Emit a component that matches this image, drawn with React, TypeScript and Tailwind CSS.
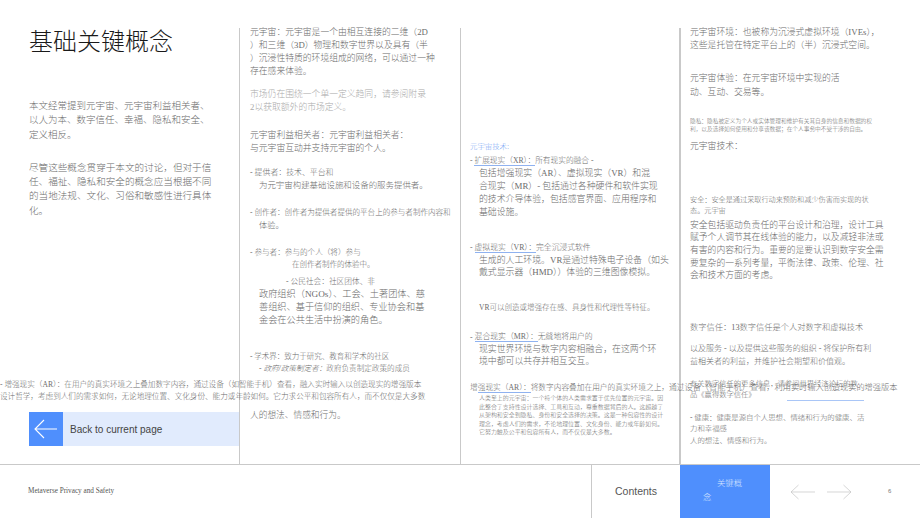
function Arrow({ dir, className }: { dir: "left" | "right"; className: string }) {
  return (
    <svg viewBox="0 0 26 16" fill="none" stroke="currentColor" strokeWidth="0.7" className={className}>
      {dir === "left" ? <path d="M25 8H1M8.5 1L1 8l7.5 7" /> : <path d="M1 8h24M17.5 1L25 8l-7.5 7" />}
    </svg>
  );
}

const L = "block whitespace-nowrap";
const U = "border-b border-[#8fb2f0]";

export default function App() {
  return (
    <div className="relative flex h-[518px] w-[920px] flex-col overflow-hidden bg-white font-['Liberation_Serif','Noto_Sans_CJK_SC',serif] font-light text-[#6b6b6b]">
      <main className="flex h-[465px] border-b border-[#c9c9c9] pt-[28px]">
        <section className="flex w-[240px] flex-col border-r border-[#c9c9c9] pl-[29px]">
          <h1 className="-mt-[2px] whitespace-nowrap text-[24px] leading-[32px] font-light text-[#1a1a1a]">基础关键概念</h1>
          <p className="mt-[41px] text-[9.5px] leading-[14.3px]">
            <span className={L}>本文经常提到元宇宙、元宇宙利益相关者、</span>
            <span className={L}>以人为本、数字信任、幸福、隐私和安全、</span>
            <span className={L}>定义相反。</span>
          </p>
          <p className="mt-[19px] text-[9.6px] leading-[14.3px]">
            <span className={L}>尽管这些概念贯穿于本文的讨论，但对于信</span>
            <span className={L}>任、福祉、隐私和安全的概念应当根据不同</span>
            <span className={L}>的当地法规、文化、习俗和敏感性进行具体</span>
            <span className={L}>化。</span>
          </p>
          <a className="mt-[194px] flex h-[34px] items-center bg-[#e1ebfd] font-['Liberation_Sans',sans-serif] text-[10px] font-normal text-[#444]">
            <span className="flex h-[34px] w-[34px] items-center justify-center bg-[#4f8ffd] text-white">
              <svg viewBox="0 0 24 20" fill="none" stroke="currentColor" strokeWidth="1.1" className="h-[20px] w-[24px]">
                <path d="M23 10H1M10 1l-9 9 9 9" />
              </svg>
            </span>
            <span className="ml-[7px]">Back to current page</span>
          </a>
        </section>

        <section className="flex w-[221px] flex-col border-r border-[#c9c9c9] pl-[10px] text-[8.8px]">
          <p className="-mt-[2px] leading-[13px]">
            <span className={L}>元宇宙：元宇宙是一个由相互连接的二维（2D</span>
            <span className={L}>）和三维（3D）物理和数字世界以及具有（半</span>
            <span className={L}>）沉浸性特质的环境组成的网络，可以通过一种</span>
            <span className={L}>存在感来体验。</span>
          </p>
          <p className="mt-[10px] leading-[13px] text-[#aaa]">
            <span className={L}>市场仍在围绕一个单一定义趋同，请参阅附录</span>
            <span className={L}>2以获取额外的市场定义。</span>
          </p>
          <p className="mt-[15px] leading-[13px]">
            <span className={L}>元宇宙利益相关者：元宇宙利益相关者：</span>
            <span className={L}>与元宇宙互动并支持元宇宙的个人。</span>
          </p>
          <p className="mt-[11px] text-[7.9px] leading-[13px]">- 提供者：技术、平台和</p>
          <p className="pl-[9px] text-[8.45px] leading-[12.5px]">为元宇宙构建基础设施和设备的服务提供者。</p>
          <p className="mt-[14px] text-[7.55px] leading-[13px] whitespace-nowrap">- 创作者：创作者为提供者提供的平台上的参与者制作内容和</p>
          <p className="pl-[9px] text-[8.2px] leading-[13px]">体验。</p>
          <p className="mt-[14px] text-[7.6px] leading-[13px]">- 参与者：参与的个人（将）参与</p>
          <p className="pl-[42px] text-[7.5px] leading-[12.5px]">在创作者制作的体验中。</p>
          <p className="mt-[4px] pl-[36px] text-[7.7px] leading-[13px]">- 公民社会：社区团体、非</p>
          <p className="pl-[9px] text-[9.2px] leading-[13px]">
            <span className={L}>政府组织（NGOs）、工会、土著团体、慈</span>
            <span className={L}>善组织、基于信仰的组织、专业协会和基</span>
            <span className={L}>金会在公共生活中扮演的角色。</span>
          </p>
          <p className="mt-[23px] text-[7.5px] leading-[13px]">- 学术界：致力于研究、教育和学术的社区</p>
          <p className="pl-[9px] text-[7.6px] leading-[12px] whitespace-nowrap">- <i>政府/政策制定者：</i>政府负责制定政策的成员</p>
          <p className="mt-[34px] text-[8.7px] leading-[13px]">人的想法、情感和行为。</p>
        </section>

        <section className="flex w-[220px] flex-col border-r-2 border-[#c9c9c9] pl-[9px] text-[8.9px]">
          <p className="mt-[112px] text-[7.4px] leading-[13px] text-[#7aa7f5]">元宇宙技术:</p>
          <p className="mt-[1px] text-[7.7px] leading-[13px] whitespace-nowrap">- <span className={U}>扩展现实（XR）：</span>所有现实的融合 -</p>
          <p className="pl-[9px] leading-[13px]">
            <span className={L}>包括增强现实（AR）、虚拟现实（VR）和混</span>
            <span className={L}>合现实（MR）- 包括通过各种硬件和软件实现</span>
            <span className={L}>的技术介导体验，包括感官界面、应用程序和</span>
            <span className={L}>基础设施。</span>
          </p>
          <p className="mt-[21.5px] text-[7.8px] leading-[13px] whitespace-nowrap">- <span className={U}>虚拟现实（VR）：</span>完全沉浸式软件</p>
          <p className="pl-[9px] leading-[12.5px]">
            <span className={L}>生成的人工环境。VR是通过特殊电子设备（如头</span>
            <span className={L}>戴式显示器（HMD））体验的三维图像模拟。</span>
          </p>
          <p className="mt-[22px] pl-[9px] text-[7.5px] leading-[13px] whitespace-nowrap">VR可以创造或增强存在感、具身性和代理性等特征。</p>
          <p className="mt-[16px] text-[7.85px] leading-[13px] whitespace-nowrap">- <span className={U}>混合现实（MR）：</span>无缝地将用户的</p>
          <p className="pl-[9px] leading-[12.5px]">
            <span className={L}>现实世界环境与数字内容相融合，在这两个环</span>
            <span className={L}>境中都可以共存并相互交互。</span>
          </p>
          <p className="mt-[14.5px] text-[7.7px] leading-[12px] whitespace-nowrap">增<span className={U}>强现实（AR）：</span>将数字内容叠加在用户的真实环境之上，通过<span className="text-[8.2px]">设备（智能手机）查看，利用实时输入创造现实的增强版本</span></p>
          <p className="pl-[9px] text-[5.95px] leading-[8.5px]">
            <span className={L}>人类至上的元宇宙：一个将个体的人类需求置于优先位置的元宇宙。因</span>
            <span className={L}>此整合了支持性设计选择、工具和互动，尊重数据背后的人。这超越了</span>
            <span className={L}>从架构和安全到隐私、身份和安全选择的决策。这是一种包容性的设计</span>
            <span className={L}>理念，考虑人们的需求，不论地理位置、文化身份、能力或年龄如何。</span>
            <span className={L}>它努力触及公平和包容所有人，而不仅仅是大多数。</span>
          </p>
        </section>

        <section className="flex flex-1 flex-col pl-[9px] text-[8.8px]">
          <p className="-mt-[2px] leading-[13px]">
            <span className={L}>元宇宙环境：也被称为沉浸式虚拟环境（IVEs），</span>
            <span className={L}>这些是托管在特定平台上的（半）沉浸式空间。</span>
          </p>
          <p className="mt-[19px] leading-[14px]">
            <span className={L}>元宇宙体验：在元宇宙环境中实现的活</span>
            <span className={L}>动、互动、交易等。</span>
          </p>
          <p className="mt-[18px] text-[5.7px] leading-[8px]">
            <span className={L}>隐私：隐私被定义为个人或实体管理和维护有关其自身的信息和数据的权</span>
            <span className={L}>利，以及选择如何使用和分享该数据；在个人事务中不受干涉的自由。</span>
          </p>
          <p className="mt-[6px] leading-[14px]">元宇宙技术：</p>
          <p className="mt-[42px] text-[7.15px] leading-[11px]">
            <span className={L}>安全：安全是通过采取行动来预防和减少伤害而实现的状</span>
            <span className={L}>态。元宇宙</span>
          </p>
          <p className="mt-[1.5px] leading-[12.7px]">
            <span className={L}>安全包括驱动负责任的平台设计和治理，设计工具</span>
            <span className={L}>赋予个人调节其在线体验的能力，以及减轻非法或</span>
            <span className={L}>有害的内容和行为。重要的是要认识到数字安全需</span>
            <span className={L}>要复杂的一系列考量，平衡法律、政策、伦理、社</span>
            <span className={L}>会和技术方面的考虑。</span>
          </p>
          <p className="mt-[39px] text-[8.25px] leading-[13px] whitespace-nowrap">数字信任：13数字信任是个人对数字和虚拟技术</p>
          <p className="mt-[9px] text-[8px] leading-[12.5px]">
            <span className={L}>以及服务 - 以及提供这些服务的组织 - 将保护所有利</span>
            <span className={L}>益相关者的利益，并维护社会期望和价值观。</span>
          </p>
          <p className="mt-[9.5px] text-[7.3px] leading-[11px]">
            <span className={L}>有关数字信任的更多信息，请参阅世界经济论坛的数</span>
            <span className={L}>品《赢得数字信任》</span>
          </p>
          <p className="mt-[12.5px] text-[7.4px] leading-[11px]">
            <span className={L}>- 健康：健康是源自个人思想、情绪和行为的健康、活</span>
            <span className={L}>力和幸福感</span>
          </p>
          <p className="text-[7.4px] leading-[13px]">人的想法、情感和行为。</p>
        </section>
      </main>

      <footer className="flex h-[53px] items-stretch">
        <p className="flex w-[591px] items-center pl-[28px] text-[7.2px] text-[#555]">Metaverse Privacy and Safety</p>
        <span className="flex w-[89px] items-center justify-center border-l border-[#c9c9c9] font-['Liberation_Sans',sans-serif] text-[10.5px] font-normal text-[#555]">Contents</span>
        <span className="flex w-[90px] flex-col justify-center bg-[#4f8ffd] pb-[2px] pl-[23px] text-[8.4px] leading-[14px] text-[#d5e4ff]">
          <span className="pl-[14px]">关键概</span>
          <span>念</span>
        </span>
        <div className="flex items-center pl-[20px] text-[#c4c4c4]">
          <Arrow dir="left" className="h-[16px] w-[26px]" />
          <Arrow dir="right" className="ml-[10px] h-[16px] w-[26px]" />
          <span className="ml-[36px] font-['Liberation_Sans',sans-serif] text-[6px] text-[#777]">6</span>
        </div>
      </footer>

      <p className="absolute top-[379px] left-0 text-[7.6px] leading-[12px] whitespace-nowrap">
        <span className={L}>- 增强现实（AR）：在用户的真实环境之上叠加数字内容，通过设备（如智能手机）查看，融入实时输入以创造现实的增强版本</span>
        <span className={L}>设计哲学，考虑到人们的需求如何，无论地理位置、文化身份、能力或年龄如何。它力求公平和包容所有人，而不仅仅是大多数</span>
      </p>
      <span className="absolute top-[400px] left-[787px] h-px w-[77px] bg-[#a9c6f7]" />
    </div>
  );
}
